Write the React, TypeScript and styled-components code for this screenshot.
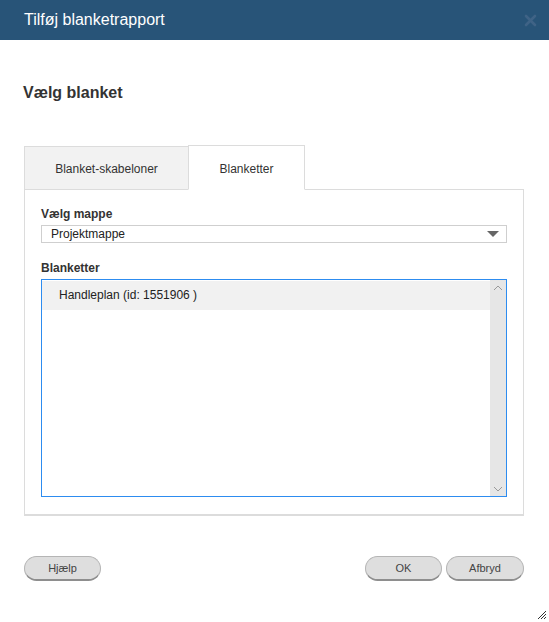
import styled, { createGlobalStyle } from 'styled-components';

const GlobalStyle = createGlobalStyle`
  html, body {
    margin: 0;
    padding: 0;
    background: #fff;
  }
  body {
    font-family: "Liberation Sans", Arial, sans-serif;
    color: #333;
  }
`;

const Dialog = styled.div`
  position: relative;
  width: 549px;
  height: 622px;
  display: flex;
  flex-direction: column;
  background: #fff;
  overflow: hidden;
`;

const TitleBar = styled.div`
  height: 40px;
  flex: none;
  background: #285478;
  display: flex;
  align-items: center;
  justify-content: space-between;
  padding: 0 12px 0 24px;
`;

const Title = styled.div`
  font-family: "Liberation Sans", Arial, sans-serif;
  font-size: 16px;
  line-height: 18px;
  color: #fff;
  padding-bottom: 1px;
`;

const CloseButton = styled.button`
  border: 0;
  background: transparent;
  padding: 0;
  width: 13px;
  height: 13px;
  display: flex;
  cursor: pointer;
`;

const Body = styled.div`
  flex: 1;
  display: flex;
  flex-direction: column;
  padding: 0 25px 0 24px;
`;

const Heading = styled.div`
  margin: 44px 0 0 -1px;
  font-size: 16px;
  font-weight: bold;
  color: #333;
  line-height: 18px;
`;

const Tabs = styled.div`
  margin-top: 43px;
  display: flex;
  align-items: flex-end;
`;

const Tab = styled.div<{ $active?: boolean; $w: number }>`
  width: ${p => p.$w}px;
  height: ${p => (p.$active ? '45px' : '44px')};
  box-sizing: border-box;
  display: flex;
  align-items: center;
  justify-content: center;
  font-size: 12px;
  color: #333;
  border: 1px solid #dcdcdc;
  border-bottom: ${p => (p.$active ? '1px solid #fff' : '1px solid #dcdcdc')};
  background: ${p => (p.$active ? '#fff' : '#f2f2f2')};
  margin-bottom: -1px;
  margin-left: ${p => (p.$active ? '-1px' : '0')};
  position: relative;
  z-index: ${p => (p.$active ? 1 : 0)};
  padding-top: ${p => (p.$active ? '2px' : '1px')};
`;

const TabPanel = styled.div`
  height: 327px;
  box-sizing: border-box;
  border: 1px solid #dcdcdc;
  border-bottom-width: 2px;
  padding: 17px 16px 17px 16px;
  display: flex;
  flex-direction: column;
`;

const FieldLabel = styled.div<{ $gap?: number }>`
  font-size: 12px;
  font-weight: bold;
  color: #333;
  line-height: 15px;
  margin-top: ${p => p.$gap ?? 0}px;
  margin-bottom: 3px;
`;

const Select = styled.div`
  height: 18px;
  box-sizing: border-box;
  border: 1px solid #cfcfcf;
  display: flex;
  align-items: center;
  justify-content: space-between;
  padding: 0 7px 0 9px;
  font-size: 12px;
  color: #222;
`;

const Caret = styled.span`
  width: 0;
  height: 0;
  border-left: 6px solid transparent;
  border-right: 6px solid transparent;
  border-top: 6px solid #666;
`;

const ListBox = styled.div`
  height: 220px;
  box-sizing: border-box;
  border: 1px solid #2d8cf0;
  display: flex;
`;

const ListItems = styled.div`
  flex: 1;
  padding-top: 1px;
`;

const ListItem = styled.div<{ $selected?: boolean }>`
  height: 29px;
  display: flex;
  align-items: center;
  padding-left: 17px;
  font-size: 12px;
  color: #222;
  background: ${p => (p.$selected ? '#f1f1f1' : 'transparent')};
`;

const ScrollTrack = styled.div`
  width: 16px;
  background: #e6e6e6;
  display: flex;
  flex-direction: column;
  justify-content: space-between;
  align-items: center;
  padding: 5px 0 4px;
`;

const Footer = styled.div`
  margin-top: 40px;
  display: flex;
  align-items: center;
  gap: 4px;
`;

const Spacer = styled.div`
  flex: 1;
`;

const PillButton = styled.button<{ $w?: number }>`
  height: 25px;
  width: ${p => p.$w ?? 77}px;
  padding: 0;
  border-radius: 13px;
  border: 1px solid #b5b5b5;
  border-bottom: 2px solid #8e8e8e;
  background: #dedede;
  font-family: "Liberation Sans", Arial, sans-serif;
  font-size: 11px;
  color: #444;
  cursor: pointer;
  box-sizing: border-box;
`;

const Grip = styled.svg`
  position: absolute;
  right: 2px;
  bottom: 2px;
`;

export default function App() {
  return (
    <>
      <GlobalStyle />
      <Dialog>
        <TitleBar>
          <Title>Tilføj blanketrapport</Title>
          <CloseButton aria-label="Luk">
            <svg width="13" height="13" viewBox="0 0 13 13">
              <path d="M2 2 L11 11 M11 2 L2 11" stroke="#3f6386" strokeWidth="2.6" strokeLinecap="round" />
            </svg>
          </CloseButton>
        </TitleBar>
        <Body>
          <Heading>Vælg blanket</Heading>
          <Tabs>
            <Tab $w={165}>Blanket-skabeloner</Tab>
            <Tab $active $w={117}>Blanketter</Tab>
          </Tabs>
          <TabPanel>
            <FieldLabel>Vælg mappe</FieldLabel>
            <Select>
              <span>Projektmappe</span>
              <Caret />
            </Select>
            <FieldLabel $gap={18}>Blanketter</FieldLabel>
            <ListBox>
              <ListItems>
                <ListItem $selected>Handleplan (id: 1551906 )</ListItem>
              </ListItems>
              <ScrollTrack>
                <svg width="10" height="6" viewBox="0 0 10 6">
                  <path d="M1 5 L5 1 L9 5" fill="none" stroke="#999" strokeWidth="1" />
                </svg>
                <svg width="10" height="6" viewBox="0 0 10 6">
                  <path d="M1 1 L5 5 L9 1" fill="none" stroke="#999" strokeWidth="1" />
                </svg>
              </ScrollTrack>
            </ListBox>
          </TabPanel>
          <Footer>
            <PillButton>Hjælp</PillButton>
            <Spacer />
            <PillButton>OK</PillButton>
            <PillButton $w={78}>Afbryd</PillButton>
          </Footer>
        </Body>
        <Grip width="12" height="12" viewBox="0 0 12 12">
          <path d="M11 3 L3 11 M11 6 L6 11 M11 9 L9 11" stroke="#333" strokeWidth="1" />
        </Grip>
      </Dialog>
    </>
  );
}
